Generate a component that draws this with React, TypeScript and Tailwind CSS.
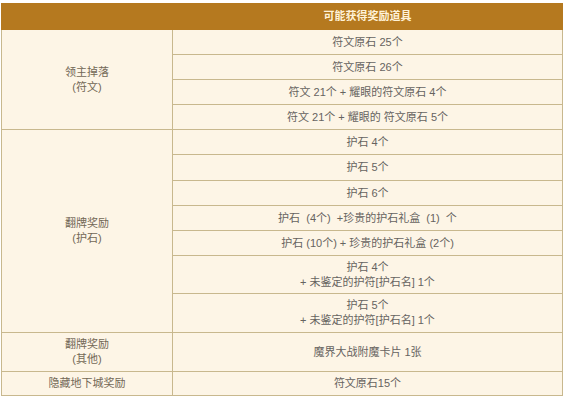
import React from "react";

const B = "border border-[#c8b88e]";
const cellR = `${B} text-center align-middle px-1 leading-[15px]`;

export default function App() {
  const rows: { left?: { text: string[]; span: number }; right: string[]; h: number }[] = [
    { left: { text: ["领主掉落", "(符文)"], span: 4 }, right: ["符文原石 25个"], h: 25 },
    { right: ["符文原石 26个"], h: 25 },
    { right: ["符文 21个 + 耀眼的符文原石 4个"], h: 25 },
    { right: ["符文 21个 + 耀眼的 符文原石 5个"], h: 25 },
    { left: { text: ["翻牌奖励", "(护石)"], span: 7 }, right: ["护石 4个"], h: 25 },
    { right: ["护石 5个"], h: 26 },
    { right: ["护石 6个"], h: 25 },
    { right: ["护石  (4个)  +珍贵的护石礼盒  (1)  个"], h: 25 },
    { right: ["护石 (10个) + 珍贵的护石礼盒 (2个)"], h: 25 },
    { right: ["护石 4个", "+ 未鉴定的护符[护石名] 1个"], h: 38 },
    { right: ["护石 5个", "+ 未鉴定的护符[护石名] 1个"], h: 39 },
    { left: { text: ["翻牌奖励", "(其他)"], span: 1 }, right: ["魔界大战附魔卡片 1张"], h: 39 },
    { left: { text: ["隐藏地下城奖励"], span: 1 }, right: ["符文原石15个"], h: 24 },
  ];
  return (
    <div
      className="w-[564px] h-[400px] bg-white pt-[3px] pl-[1px]"
      style={{ fontFamily: '"Liberation Sans", "Noto Sans CJK SC", sans-serif' }}
    >
      <table className="border-collapse w-[562px] table-fixed bg-[#fdf5e6] text-[11px] text-[#666360]">
        <colgroup>
          <col className="w-[171px]" />
          <col />
        </colgroup>
        <thead>
          <tr>
            <th colSpan={2} className="h-[26px] bg-[#b5791f] border border-[#b5791f] p-0">
              <div className="pl-[171px] text-center text-[11px] font-bold text-[#fff2d8]">可能获得奖励道具</div>
            </th>
          </tr>
        </thead>
        <tbody>
          {rows.map((r, i) => (
            <tr key={i}>
              {r.left && (
                <td rowSpan={r.left.span} className={`${B} text-center align-middle leading-[15px] text-[#736856]`}>
                  {r.left.text.map((t, j) => (
                    <div key={j}>{t}</div>
                  ))}
                </td>
              )}
              <td className={`${cellR} whitespace-pre`} style={{ height: r.h }}>
                {r.right.map((t, j) => (
                  <div key={j}>{t}</div>
                ))}
              </td>
            </tr>
          ))}
        </tbody>
      </table>
    </div>
  );
}
